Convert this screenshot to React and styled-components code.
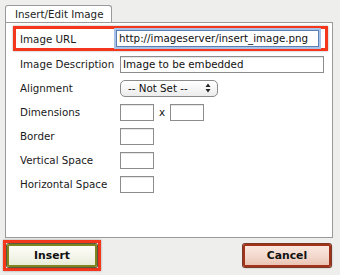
import React from "react";
import styled, { createGlobalStyle } from "styled-components";

const Global = createGlobalStyle`
  html, body { margin: 0; padding: 0; background: #eeeeec; }
  body { font-family: Verdana, "DejaVu Sans", sans-serif; font-size: 10px; color: #111; }
`;

const Page = styled.div`
  width: 340px;
  height: 275px;
  padding: 5px 0 0 5px;
  box-sizing: border-box;
  background: #eeeeec;
`;

const TabBar = styled.div`
  display: flex;
  height: 17px;
`;

const Tab = styled.div`
  display: flex;
  align-items: center;
  padding: 0 8px 0 9px;
  border: 1px solid #9a9a9a;
  border-bottom: none;
  border-radius: 3px 3px 0 0;
  background: #ffffff;
  font-size: 10.3px;
  color: #222;
  position: relative;
  z-index: 1;
  margin-bottom: -1px;
  height: 17px;
  box-sizing: border-box;
`;

const Panel = styled.div`
  width: 328px;
  height: 216px;
  box-sizing: border-box;
  border: 1px solid #9a9a9a;
  background: #ffffff;
  padding: 3px 0 0 7px;
  display: flex;
  flex-direction: column;
`;

const Highlight = styled.div`
  display: grid;
  grid-template-columns: 96px 1fr;
  align-items: center;
  width: 315px;
  height: 25px;
  box-sizing: border-box;
  border: 3px solid #f3361c;
  box-shadow: 0 0 2px rgba(0,0,0,0.35);
  padding-left: 4px;
  margin-bottom: 1px;
`;

const Row = styled.div`
  display: grid;
  grid-template-columns: 100px 1fr;
  align-items: center;
  height: 24px;
  padding-left: 7px;
`;

const Label = styled.label`
  font-size: 10.3px;
  color: #1a1a1a;
  white-space: nowrap;
`;

const Field = styled.div`
  display: flex;
  align-items: center;
  gap: 5px;
`;

const TextInput = styled.div`
  box-sizing: border-box;
  width: ${p => p.$w}px;
  height: 17px;
  border: 1px solid ${p => (p.$focus ? "#5a7fb4" : "#8c8c8c")};
  box-shadow: ${p => (p.$focus ? "0 0 0 2px #a7c2e6" : "inset 0 1px 0 #e6e6e6")};
  background: #fff;
  font-size: 10.3px;
  line-height: 15px;
  padding-left: 2px;
  color: #111;
  white-space: nowrap;
  overflow: hidden;
`;

const SelectBox = styled.div`
  box-sizing: border-box;
  width: 98px;
  height: 17px;
  border: 1px solid #8a8a8a;
  border-radius: 5px;
  background: linear-gradient(#ffffff, #ececec);
  display: flex;
  align-items: center;
  justify-content: space-between;
  padding: 0 6px 0 7px;
  font-size: 10.3px;
  color: #111;
`;

const Times = styled.span`
  font-size: 10.3px;
  color: #111;
`;

const ButtonRow = styled.div`
  display: flex;
  justify-content: space-between;
  align-items: center;
  width: 328px;
  margin-left: -2px;
  margin-top: 2px;
`;

const ButtonHighlight = styled.div`
  border: 3px solid #f3361c;
  padding: 1px;
  box-shadow: 0 0 2px rgba(0,0,0,0.35);
`;

const Button = styled.div`
  box-sizing: border-box;
  width: ${p => p.$w}px;
  height: 23px;
  display: flex;
  align-items: center;
  justify-content: center;
  font-size: 10.8px;
  font-weight: bold;
  color: #111;
  border: 2px solid ${p => (p.$variant === "ok" ? "#7c8520" : "#a3321a")};
  box-shadow: 0 0 0 1px ${p => (p.$variant === "ok" ? "#5a5a3a" : "#7a3a2a")}, 1px 1px 2px rgba(0,0,0,0.25);
  border-radius: 2px;
  background: ${p =>
    p.$variant === "ok"
      ? "linear-gradient(#fdfdf8, #f3f4e8 60%, #e9ecd8)"
      : "linear-gradient(#fae8e0, #f2d6ca 60%, #eac4b4)"};
`;

const Arrows = () => (
  <svg width="6" height="10" viewBox="0 0 6 10">
    <path d="M3 0.5 L5.5 4 L0.5 4 Z" fill="#222" />
    <path d="M3 9.5 L5.5 6 L0.5 6 Z" fill="#222" />
  </svg>
);

export default function App() {
  return (
    <Page>
      <Global />
      <TabBar>
        <Tab>Insert/Edit Image</Tab>
      </TabBar>
      <Panel>
        <Highlight>
          <Label>Image URL</Label>
          <TextInput $w={203} $focus>http://imageserver/insert_image.png</TextInput>
        </Highlight>
        <Row>
          <Label>Image Description</Label>
          <TextInput $w={204}>Image to be embedded</TextInput>
        </Row>
        <Row>
          <Label>Alignment</Label>
          <Field>
            <SelectBox>
              <span>-- Not Set --</span>
              <Arrows />
            </SelectBox>
          </Field>
        </Row>
        <Row>
          <Label>Dimensions</Label>
          <Field>
            <TextInput $w={34} />
            <Times>x</Times>
            <TextInput $w={34} />
          </Field>
        </Row>
        <Row>
          <Label>Border</Label>
          <TextInput $w={34} />
        </Row>
        <Row>
          <Label>Vertical Space</Label>
          <TextInput $w={34} />
        </Row>
        <Row>
          <Label>Horizontal Space</Label>
          <TextInput $w={34} />
        </Row>
      </Panel>
      <ButtonRow>
        <ButtonHighlight>
          <Button $variant="ok" $w={90}>Insert</Button>
        </ButtonHighlight>
        <Button $variant="cancel" $w={88}>Cancel</Button>
      </ButtonRow>
    </Page>
  );
}
